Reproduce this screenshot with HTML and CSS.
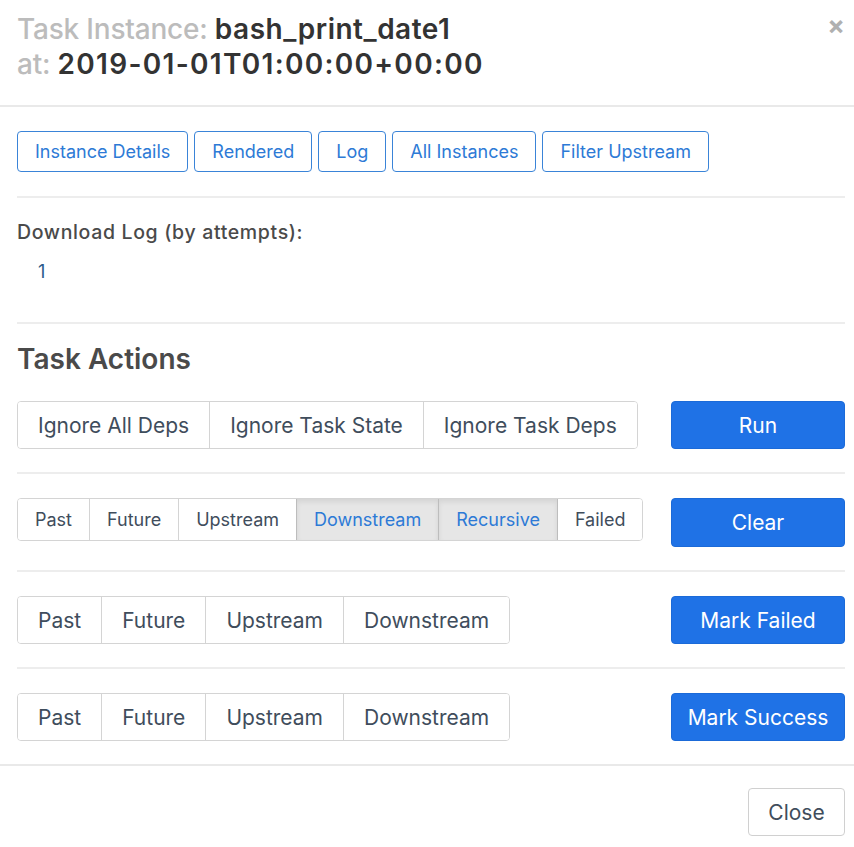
FILE: index.html
```html
<!DOCTYPE html>
<html>
<head>
<meta charset="utf-8">
<link rel="stylesheet" href="styles.css">
</head>
<body>
<div class="modal">
  <div class="modal-header">
    <h4 class="modal-title">
      <span class="lbl">Task Instance:</span> <span class="val">bash_print_date1</span><br>
      <span class="lbl">at:</span> <span class="val date">2019-01-01T01:00:00+00:00</span>
    </h4>
    <button class="close">&times;</button>
  </div>
  <div class="modal-body">
    <div class="nav-btns">
      <button class="btn-outline">Instance Details</button>
      <button class="btn-outline">Rendered</button>
      <button class="btn-outline">Log</button>
      <button class="btn-outline">All Instances</button>
      <button class="btn-outline">Filter Upstream</button>
    </div>
    <hr class="sep">
    <div class="download">
      <div class="dl-label">Download Log (by attempts):</div>
      <ul class="dl-list"><li><a class="dl-link">1</a></li></ul>
    </div>
    <hr class="sep sep-title">
    <h4 class="section-title">Task Actions</h4>
    <div class="action-row">
      <div class="btn-group large">
        <button class="seg">Ignore All Deps</button>
        <button class="seg">Ignore Task State</button>
        <button class="seg">Ignore Task Deps</button>
      </div>
      <button class="btn-primary">Run</button>
    </div>
    <hr class="sep-row">
    <div class="action-row">
      <div class="btn-group small">
        <button class="seg">Past</button>
        <button class="seg">Future</button>
        <button class="seg">Upstream</button>
        <button class="seg active">Downstream</button>
        <button class="seg active">Recursive</button>
        <button class="seg after-active">Failed</button>
      </div>
      <button class="btn-primary tall">Clear</button>
    </div>
    <hr class="sep-row">
    <div class="action-row">
      <div class="btn-group large">
        <button class="seg">Past</button>
        <button class="seg">Future</button>
        <button class="seg">Upstream</button>
        <button class="seg">Downstream</button>
      </div>
      <button class="btn-primary">Mark Failed</button>
    </div>
    <hr class="sep-row">
    <div class="action-row">
      <div class="btn-group large">
        <button class="seg">Past</button>
        <button class="seg">Future</button>
        <button class="seg">Upstream</button>
        <button class="seg">Downstream</button>
      </div>
      <button class="btn-primary">Mark Success</button>
    </div>
  </div>
  <div class="modal-footer">
    <button class="btn-default">Close</button>
  </div>
</div>
</body>
</html>
```
FILE: styles.css
```css
html, body {
  margin: 0;
  padding: 0;
  background: #fff;
}
body {
  font-family: Inter, "Liberation Sans", Arial, sans-serif;
  color: #51504f;
  overflow: hidden;
}
button {
  font-family: inherit;
  cursor: pointer;
}
.modal {
  width: 100%;
}
.modal-header {
  display: flex;
  justify-content: space-between;
  align-items: flex-start;
  padding: 12px 9px 23px 17px;
  border-bottom: 2px solid #e9e9e9;
}
.modal-title {
  margin: 0;
  font-size: 28px;
  line-height: 35px;
  font-weight: 500;
  letter-spacing: -0.2px;
}
.lbl {
  color: #bcbcbc;
}
.val {
  color: #333;
  font-weight: 600;
  letter-spacing: 0.5px;
}
.val.date {
  letter-spacing: 1.3px;
}
.close {
  border: none;
  background: none;
  padding: 0;
  margin-top: 2px;
  font-size: 26px;
  font-weight: 700;
  line-height: 24px;
  color: #b0b0b0;
}
.modal-body {
  padding: 24px 9px 23px 17px;
}
.nav-btns {
  display: flex;
  gap: 6px;
}
.btn-outline {
  height: 41px;
  padding: 0 17px;
  font-size: 18px;
  color: #2d7ad6;
  background: #fff;
  border: 1px solid #3a84d8;
  border-radius: 4px;
}
.sep {
  border: none;
  border-top: 2px solid #ededed;
  margin: 24px 0 22px;
}
.sep-title {
  margin: 0 0 18px;
}
.sep-row {
  border: none;
  border-top: 2px solid #ededed;
  margin: 23px 0 24px;
}
.download {
  padding-bottom: 38px;
}
.dl-label {
  font-size: 19.5px;
  line-height: 24px;
  font-weight: 500;
  color: #4a4a4a;
  letter-spacing: 0.65px;
}
.dl-list {
  list-style: none;
  margin: 16px 0 0;
  padding: 0 0 0 21px;
}
.dl-link {
  font-size: 18px;
  line-height: 24px;
  color: #2b5a8a;
}
.section-title {
  margin: 0 0 25px;
  font-size: 28px;
  line-height: 34px;
  font-weight: 600;
  color: #4a4a4a;
}
.action-row {
  display: flex;
  justify-content: space-between;
  align-items: flex-start;
}
.btn-group {
  display: flex;
  border: 1px solid #d4d4d4;
  border-radius: 4px;
  overflow: hidden;
}
.seg {
  background: #fff;
  border: none;
  border-left: 1px solid #d4d4d4;
  color: #3f4d5c;
  margin: 0;
}
.seg:first-child {
  border-left: none;
}
.large .seg {
  height: 46px;
  font-size: 21px;
  padding: 0 20px;
}
.small .seg {
  height: 41px;
  font-size: 18px;
  padding: 0 17px;
}
.seg.active {
  background: #e6e6e6;
  color: #2d7ad6;
  border-left-color: #bdbdbd;
  box-shadow: inset 0 3px 5px rgba(0, 0, 0, 0.08);
}
.seg.after-active {
  border-left-color: #bdbdbd;
}
.btn-primary {
  width: 174px;
  height: 48px;
  font-size: 21px;
  color: #fff;
  background: #1f72e6;
  border: 1px solid #1b6ad8;
  border-radius: 4px;
  white-space: nowrap;
  padding: 0;
}
.btn-primary.tall {
  height: 49px;
}
.modal-footer {
  display: flex;
  justify-content: flex-end;
  padding: 22px 9px 20px 17px;
  border-top: 2px solid #e9e9e9;
}
.btn-default {
  width: 97px;
  height: 48px;
  font-size: 21px;
  color: #3f4d5c;
  background: #fff;
  border: 1px solid #d0d0d0;
  border-radius: 4px;
}
```
